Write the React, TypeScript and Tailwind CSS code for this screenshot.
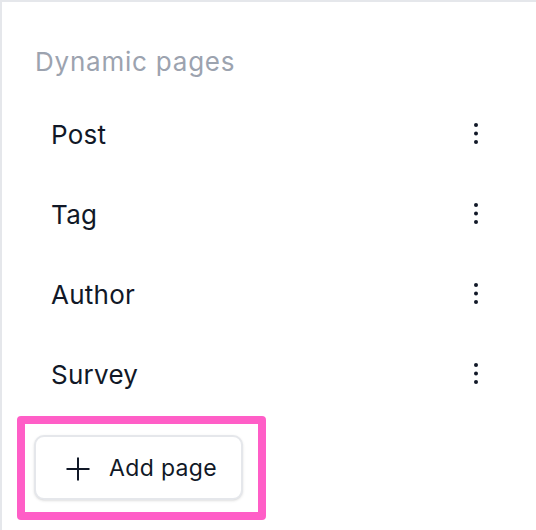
const pages = ['Post', 'Tag', 'Author', 'Survey'];

function DotsIcon() {
  return (
    <svg width="10" height="26" viewBox="0 0 10 26" fill="#111827">
      <circle cx="5" cy="4" r="2" />
      <circle cx="5" cy="12.5" r="2" />
      <circle cx="5" cy="21" r="2" />
    </svg>
  );
}

function PlusIcon() {
  return (
    <svg width="24" height="24" viewBox="0 0 24 24" fill="none" stroke="#111827" strokeWidth="2">
      <path d="M12 0.5v23M0.5 12h23" />
    </svg>
  );
}

export default function App() {
  return (
    <div
      className="w-[536px] h-[530px] bg-white border-t-2 border-l-2 border-[#e5e7eb] overflow-hidden"
      style={{ fontFamily: 'Inter, "Noto Sans", sans-serif' }}
    >
      <div className="pl-[33px] pr-[55px] pt-[44px]">
        <h2 className="text-[26px] leading-[32px] tracking-[0.03em] text-[#9ca3af] font-normal">Dynamic pages</h2>

        <ul className="mt-4">
          {pages.map((p) => (
            <li key={p} className="h-[80px] flex items-center justify-between pl-4">
              <span className="text-[26px] tracking-[0.01em] text-[#111827]">{p}</span>
              <DotsIcon />
            </li>
          ))}
        </ul>

        {/* highlight around the add button */}
        <div className="mt-[2px] ml-[-18px] w-[249px] h-[104px] border-8 border-[#ff5ec7] rounded-[4px] pl-[9px] pt-[11px]">
          <button className="w-[209px] h-[65px] flex items-center gap-[19px] pl-[30px] pt-[2px] rounded-[10px] border-2 border-[#e5e7eb] bg-white shadow-sm text-[23px] tracking-[0.015em] text-[#111827]">
            <PlusIcon />
            <span>Add page</span>
          </button>
        </div>
      </div>
    </div>
  );
}
